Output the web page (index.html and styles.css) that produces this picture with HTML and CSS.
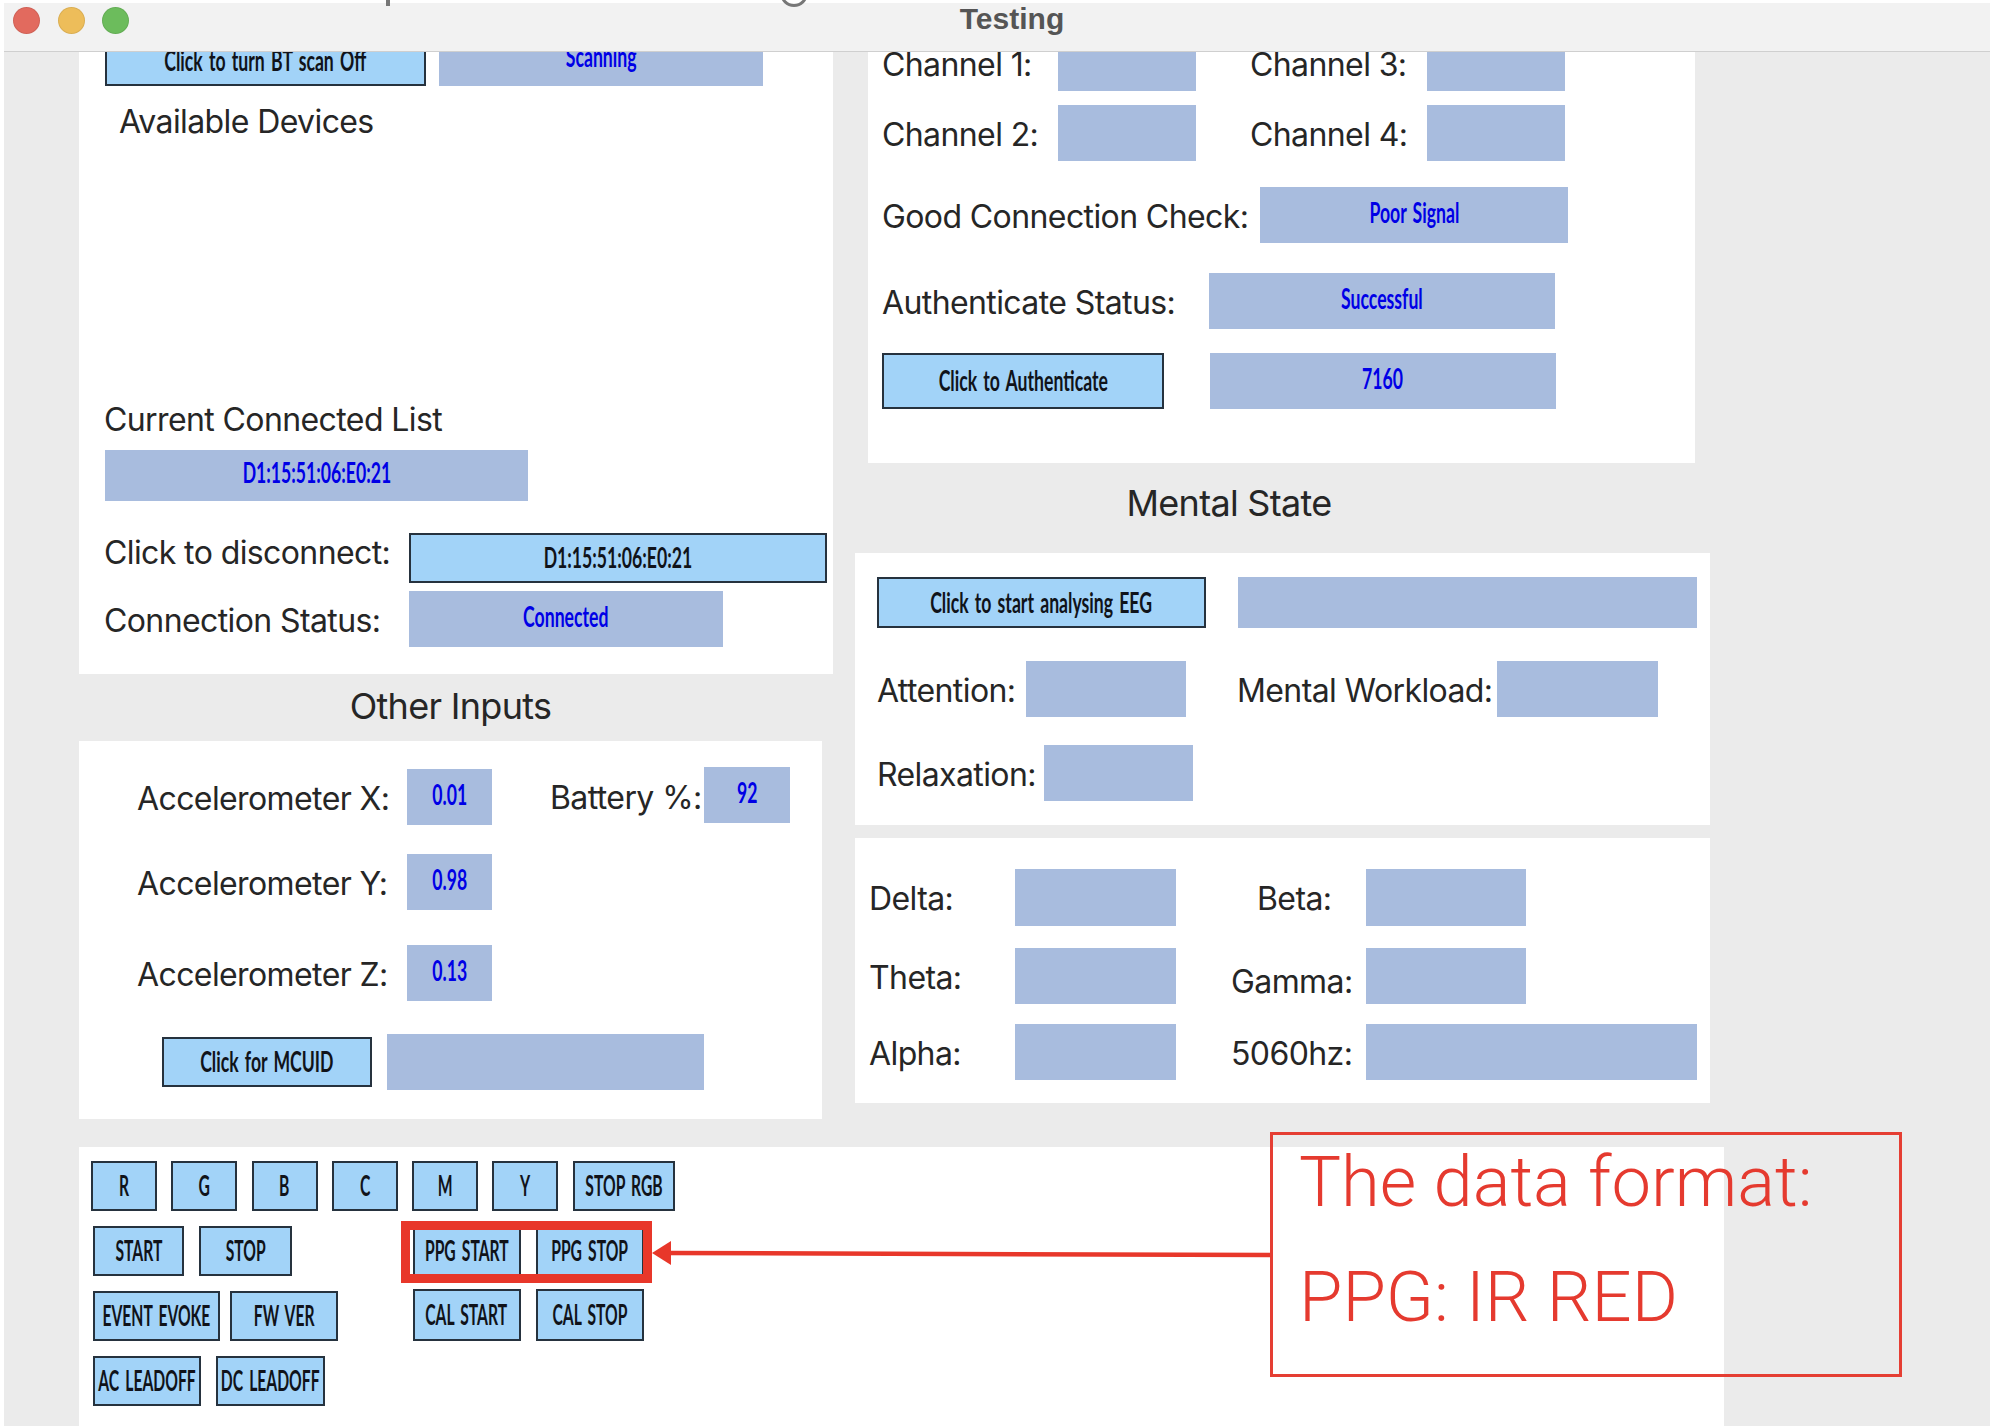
FILE: index.html
```html
<!DOCTYPE html>
<html lang="en">
<head>
<meta charset="utf-8">
<title>Testing</title>
<link rel="stylesheet" href="styles.css">
</head>
<body>
<span class="peek peek-bar"></span>
<span class="peek peek-ring"></span>
<div class="window">
  <header class="titlebar">
    <div class="lights">
      <span class="light red"></span>
      <span class="light yellow"></span>
      <span class="light green"></span>
    </div>
    <div class="title">Testing</div>
  </header>
  <main class="content">
    <div class="columns">
      <section class="col-left">
        <div class="panel panel-devices">
          <div class="row row-scan">
            <button class="btn w-321"><span class="t">Click to turn BT scan Off</span></button>
            <div class="field w-323"><span class="t">Scanning</span></div>
          </div>
          <div class="label available">Available Devices</div>
          <div class="label connected-list">Current Connected List</div>
          <div class="field w-423 h-51 connected-field"><span class="t">D1:15:51:06:E0:21</span></div>
          <div class="row row-disconnect">
            <div class="label l-304 raise">Click to disconnect:</div>
            <button class="btn w-418 h-50"><span class="t">D1:15:51:06:E0:21</span></button>
          </div>
          <div class="row row-status">
            <div class="label l-304">Connection Status:</div>
            <div class="field w-314"><span class="t">Connected</span></div>
          </div>
        </div>
        <h2 class="heading heading-other">Other Inputs</h2>
        <div class="panel panel-inputs">
          <div class="row">
            <div class="label l-269">Accelerometer X:</div>
            <div class="field w-85"><span class="t">0.01</span></div>
            <div class="label l-153 battery">Battery %:</div>
            <div class="field w-86 lift"><span class="t">92</span></div>
          </div>
          <div class="row row-acc-y">
            <div class="label l-269">Accelerometer Y:</div>
            <div class="field w-85"><span class="t">0.98</span></div>
          </div>
          <div class="row row-acc-z">
            <div class="label l-269">Accelerometer Z:</div>
            <div class="field w-85"><span class="t">0.13</span></div>
          </div>
          <div class="row row-mcuid">
            <button class="btn w-210 h-50"><span class="t">Click for MCUID</span></button>
            <div class="field w-317"></div>
          </div>
        </div>
      </section>
      <section class="col-right">
        <div class="panel panel-channels">
          <div class="row">
            <div class="label l-175">Channel 1:</div>
            <div class="field w-138"></div>
            <div class="label l-176 next-channel">Channel 3:</div>
            <div class="field w-138"></div>
          </div>
          <div class="row row-ch2">
            <div class="label l-175">Channel 2:</div>
            <div class="field w-138"></div>
            <div class="label l-176 next-channel">Channel 4:</div>
            <div class="field w-138"></div>
          </div>
          <div class="row row-good">
            <div class="label l-377">Good Connection Check:</div>
            <div class="field w-308"><span class="t">Poor Signal</span></div>
          </div>
          <div class="row row-auth">
            <div class="label l-326">Authenticate Status:</div>
            <div class="field w-345"><span class="t">Successful</span></div>
          </div>
          <div class="row row-authbtn">
            <button class="btn w-282 h-56"><span class="t">Click to Authenticate</span></button>
            <div class="field w-345 authcode"><span class="t">7160</span></div>
          </div>
        </div>
        <h2 class="heading heading-mental">Mental State</h2>
        <div class="panel panel-mental">
          <div class="row">
            <button class="btn w-329 h-51"><span class="t">Click to start analysing EEG</span></button>
            <div class="field w-459 h-51 eeg"></div>
          </div>
          <div class="row row-attention">
            <div class="label l-148">Attention:</div>
            <div class="field w-160"></div>
            <div class="label l-259 workload">Mental Workload:</div>
            <div class="field w-161"></div>
          </div>
          <div class="row row-relax">
            <div class="label l-166">Relaxation:</div>
            <div class="field w-149"></div>
          </div>
        </div>
        <div class="panel panel-bands">
          <div class="row">
            <div class="label l-145">Delta:</div>
            <div class="field w-161 h-57"></div>
            <div class="label l-108 beta">Beta:</div>
            <div class="field w-160 h-57"></div>
          </div>
          <div class="row row-theta">
            <div class="label l-145">Theta:</div>
            <div class="field w-161"></div>
            <div class="label l-134 band2 low">Gamma:</div>
            <div class="field w-160"></div>
          </div>
          <div class="row row-alpha">
            <div class="label l-145">Alpha:</div>
            <div class="field w-161"></div>
            <div class="label l-134 band2">5060hz:</div>
            <div class="field w-331"></div>
          </div>
        </div>
      </section>
    </div>
    <section class="panel panel-buttons">
      <div class="row btn-row-rgb">
        <button class="btn w-66 h-50"><span class="t">R</span></button>
        <button class="btn w-66 h-50"><span class="t">G</span></button>
        <button class="btn w-66 h-50"><span class="t">B</span></button>
        <button class="btn w-66 h-50"><span class="t">C</span></button>
        <button class="btn w-66 h-50"><span class="t">M</span></button>
        <button class="btn w-66 h-50"><span class="t">Y</span></button>
        <button class="btn w-102 h-50"><span class="t">STOP RGB</span></button>
      </div>
      <div class="lower">
        <div class="lower-left">
          <div class="row gap-15">
            <button class="btn w-91 h-50"><span class="t">START</span></button>
            <button class="btn w-93 h-50"><span class="t">STOP</span></button>
          </div>
          <div class="row gap-10">
            <button class="btn w-127 h-50"><span class="t">EVENT EVOKE</span></button>
            <button class="btn w-108 h-50"><span class="t">FW VER</span></button>
          </div>
          <div class="row gap-15">
            <button class="btn w-108 h-50"><span class="t">AC LEADOFF</span></button>
            <button class="btn w-109 h-50"><span class="t">DC LEADOFF</span></button>
          </div>
        </div>
        <div class="lower-right">
          <div class="row gap-15">
            <button class="btn w-108 h-50"><span class="t">PPG START</span></button>
            <button class="btn w-108 h-50"><span class="t">PPG STOP</span></button>
          </div>
          <div class="row gap-15 cal">
            <button class="btn w-108 h-52"><span class="t">CAL START</span></button>
            <button class="btn w-108 h-52"><span class="t">CAL STOP</span></button>
          </div>
        </div>
      </div>
    </section>
  </main>
</div>
<div class="mark-box"></div>
<svg class="mark-arrow" width="622" height="30" viewBox="0 0 622 30" aria-hidden="true">
  <path class="arrow-line" d="M16 13 L620 15"/>
  <path class="arrow-head" d="M1 13 L20 1 L20 25 Z"/>
</svg>
<div class="callout">
  <div class="callout-line first">The data format:</div>
  <div class="callout-line second">PPG: IR RED</div>
</div>
</body>
</html>
```

FILE: styles.css
```css
* { box-sizing: border-box; }
html, body { margin: 0; padding: 0; }
body {
  width: 1990px;
  height: 1426px;
  overflow: hidden;
  background: #fff;
  position: relative;
  font-family: Inter, "Liberation Sans", sans-serif;
  color: #222;
}

.peek { position: absolute; z-index: 3; }
.peek-bar { left: 386px; top: 0; width: 4px; height: 6px; background: #777; }
.peek-ring {
  left: 780px; top: -21px; width: 28px; height: 28px;
  border: 3px solid #777; border-radius: 50%;
}

.window {
  margin: 3px 0 0 4px;
  height: 1423px;
  background: #ebebeb;
  display: flex;
  flex-direction: column;
  overflow: hidden;
}
.titlebar {
  height: 49px;
  flex: none;
  background: #f2f2f2;
  border-bottom: 1px solid #cfcfcf;
  display: flex;
  align-items: flex-start;
  position: relative;
  z-index: 2;
}
.lights { display: flex; gap: 17.5px; padding: 4px 0 0 9px; }
.light { width: 27px; height: 27px; border-radius: 50%; border: 1px solid rgba(0,0,0,.08); }
.red { background: #e26a5e; }
.yellow { background: #edbd5a; }
.green { background: #6cbc5c; }
.title {
  margin-left: 826px;
  width: 114px;
  text-align: center;
  font-family: "Liberation Sans", sans-serif;
  font-size: 30px;
  line-height: 32px;
  font-weight: 700;
  color: #555;
}

.content { flex: 1; min-height: 0; overflow: hidden; padding-left: 75px; }
.columns { display: flex; margin-top: -30px; height: 1097px; }
.col-left { width: 776px; flex: none; }
.col-right { flex: 1; }
.panel { background: #fff; }

.row { display: flex; align-items: center; }

.label {
  font-family: Inter, "Liberation Sans", sans-serif;
  font-size: 32px;
  letter-spacing: -.6px;
  line-height: 40px;
  white-space: nowrap;
  text-indent: -1px;
  color: #262626;
  flex: none;
}
.row .label { padding-top: 3px; }
.heading {
  margin: 0;
  font-family: Inter, "Liberation Sans", sans-serif;
  font-size: 36px;
  letter-spacing: -.7px;
  line-height: 40px;
  font-weight: 400;
  text-align: center;
  color: #262626;
}

.field, .btn {
  flex: none;
  display: flex;
  align-items: center;
  justify-content: center;
  height: 56px;
  white-space: nowrap;
  font-family: Lato, "Liberation Sans", sans-serif;
  font-weight: 700;
  font-size: 28px;
}
.field { background: #a8bcde; color: #0000e6; padding-bottom: 7px; }
.btn {
  background: #a2d3f8;
  color: #10131a;
  border: 2px solid #26323e;
  border-radius: 0;
  padding: 0 0 2px;
}
.t { display: inline-block; transform: scaleX(.63); word-spacing: 3px; }
.panel-buttons .t { transform: scaleX(.56); word-spacing: 4px; }

.h-50 { height: 50px; }
.h-51 { height: 51px; }
.h-52 { height: 52px; }
.h-56 { height: 56px; }
.h-57 { height: 57px; }
.w-66 { width: 66px; }
.w-85 { width: 85px; }
.w-86 { width: 86px; }
.w-91 { width: 91px; }
.w-93 { width: 93px; }
.w-102 { width: 102px; }
.w-108 { width: 108px; }
.w-109 { width: 109px; }
.w-127 { width: 127px; }
.w-138 { width: 138px; }
.w-149 { width: 149px; }
.w-160 { width: 160px; }
.w-161 { width: 161px; }
.w-210 { width: 210px; }
.w-282 { width: 282px; }
.w-308 { width: 308px; }
.w-314 { width: 314px; }
.w-317 { width: 317px; }
.w-321 { width: 321px; height: 50px; }
.w-323 { width: 323.5px; height: 50px; padding-bottom: 11px; }
.w-329 { width: 329px; }
.w-331 { width: 331px; }
.w-345 { width: 345.5px; }
.w-418 { width: 418px; }
.w-423 { width: 423px; }
.w-459 { width: 459px; }

.l-108 { width: 108px; }
.l-134 { width: 134px; }
.l-145 { width: 145px; }
.l-148 { width: 148px; }
.l-153 { width: 153px; }
.l-166 { width: 166px; }
.l-175 { width: 175px; }
.l-176 { width: 175.5px; }
.l-259 { width: 259px; }
.l-269 { width: 269px; }
.l-304 { width: 304px; }
.l-326 { width: 326px; }
.l-377 { width: 377px; }

/* connection panel */
.panel-devices { width: 754px; height: 652px; padding: 14px 0 0 26px; }
.row-scan { gap: 13px; }
.available { margin: 16px 0 0 15px; }
.connected-list { margin-top: 258px; }
.connected-field { margin-top: 10px; }
.row-disconnect { margin-top: 32px; }
.raise { margin-top: -7px; margin-bottom: 7px; }
.row-status { margin-top: 8px; }

/* other inputs */
.heading-other { margin-top: 12px; width: 743px; }
.panel-inputs { width: 743px; height: 378px; margin-top: 15px; padding: 28px 0 0 59px; }
.battery { margin-left: 59px; margin-top: -2px; }
.lift { margin-top: -2px; margin-bottom: 2px; }
.row-acc-y { margin-top: 29px; }
.row-acc-z { margin-top: 35px; }
.row-mcuid { margin: 33px 0 0 24px; gap: 15px; }

/* channels */
.panel-channels { margin-left: 13px; width: 827px; height: 441px; padding: 13px 0 0 15px; }
.next-channel { margin-left: 55px; }
.row-ch2 { margin-top: 14px; }
.row-good { margin-top: 26px; }
.row-auth { margin-top: 30px; }
.row-authbtn { margin: 24px 0 0 -1px; }
.authcode { margin-left: 46px; }

/* mental state */
.heading-mental { margin-top: 20px; width: 748px; }
.panel-mental { margin-top: 30px; width: 855px; height: 272px; padding: 24px 0 0 22px; }
.eeg { margin-left: 32px; }
.row-attention { margin: 33px 0 0 1px; }
.workload { margin-left: 52px; }
.row-relax { margin: 28px 0 0 1px; }

/* bands */
.panel-bands { margin-top: 13px; width: 855px; height: 265px; padding: 31px 0 0 15px; }
.beta { margin-left: 82px; }
.band2 { margin-left: 56px; }
.low { margin-top: 8px; }
.row-theta { margin-top: 22px; }
.row-alpha { margin-top: 20px; }

/* bottom buttons */
.panel-buttons { margin-top: 28px; width: 1645px; height: 290px; padding: 14px 0 0 12px; }
.btn-row-rgb { gap: 14.3px; }
.lower { display: flex; margin: 15px 0 0 2px; }
.lower-left { width: 319.5px; display: flex; flex-direction: column; gap: 15px; }
.lower-right { display: flex; flex-direction: column; gap: 13px; }
.gap-15 { gap: 15px; }
.gap-10 { gap: 10px; }

/* annotations drawn over the screenshot */
.mark-box {
  position: absolute;
  left: 401px; top: 1221px;
  width: 251px; height: 62px;
  border-style: solid;
  border-color: #e8372a;
  border-width: 9px;
  z-index: 4;
}
.mark-arrow { position: absolute; left: 651px; top: 1240px; z-index: 4; }
.arrow-line { stroke: #e8372a; stroke-width: 4.5; fill: none; }
.arrow-head { fill: #e8372a; }
.callout {
  position: absolute;
  left: 1270px; top: 1132px;
  width: 632px; height: 245px;
  border: 3px solid #e53e33;
  padding-left: 26px;
  z-index: 4;
  font-family: Roboto, "Liberation Sans", sans-serif;
  font-weight: 300;
  font-size: 70.5px;
  color: #e53a2f;
  white-space: nowrap;
}
.callout-line { line-height: 84px; }
.first { margin-top: 5px; }
.second { margin-top: 31px; }
```
